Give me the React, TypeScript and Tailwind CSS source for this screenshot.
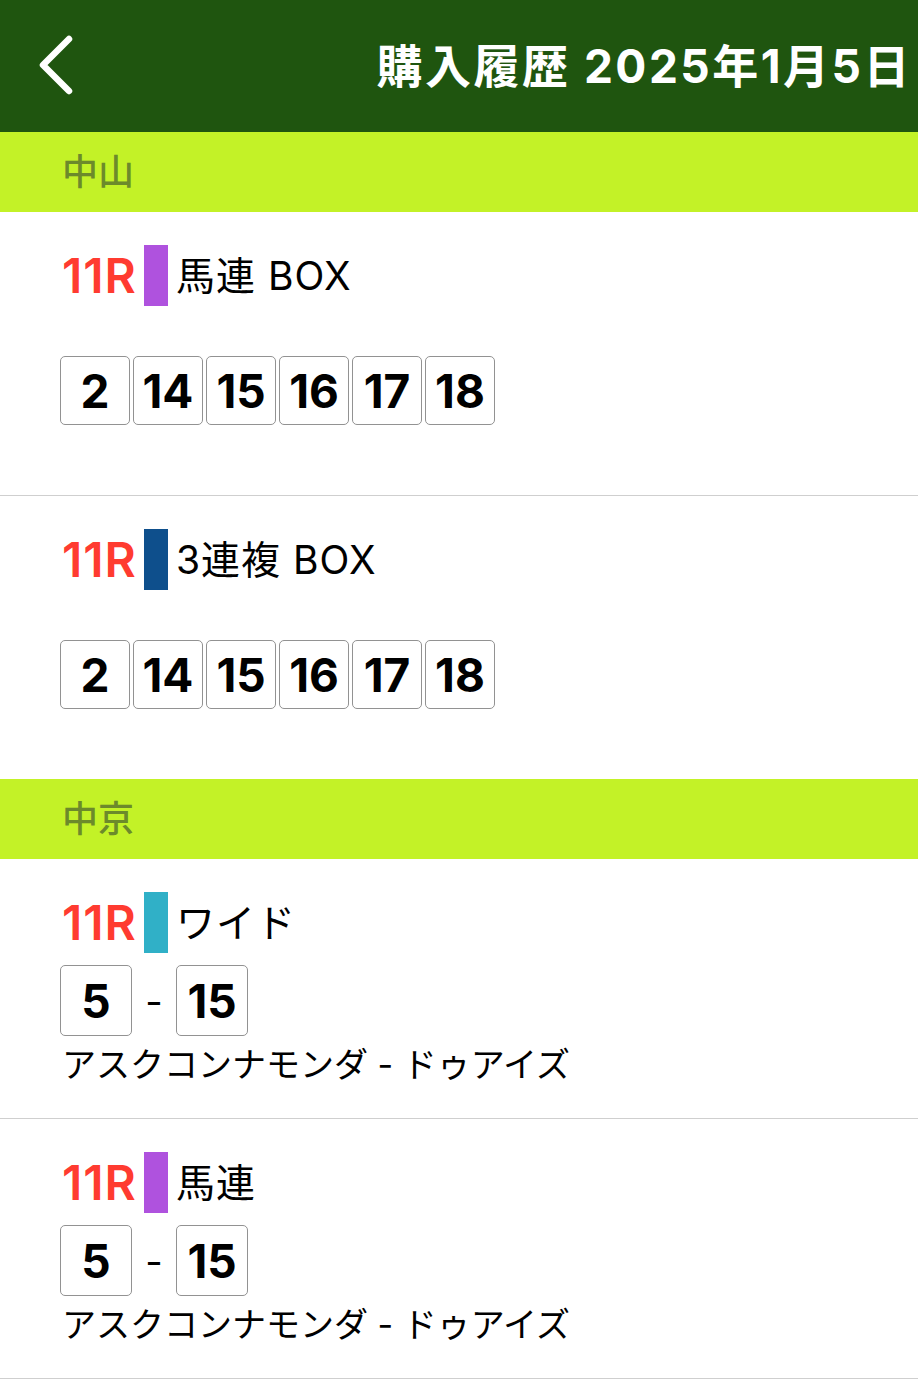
const FONT = { fontFamily: '"Inter", "Noto Sans CJK JP", sans-serif' };

type Bet = {
  type: string;
  color: string;
  nums: string[];
  box?: boolean;
  names?: string;
};

const sections: { venue: string; bets: Bet[] }[] = [
  {
    venue: "中山",
    bets: [
      { type: "馬連 BOX", color: "bg-[#af52de]", nums: ["2", "14", "15", "16", "17", "18"], box: true },
      { type: "3連複 BOX", color: "bg-[#0e4f8c]", nums: ["2", "14", "15", "16", "17", "18"], box: true },
    ],
  },
  {
    venue: "中京",
    bets: [
      { type: "ワイド", color: "bg-[#30b0c7]", nums: ["5", "15"], names: "アスクコンナモンダ - ドゥアイズ" },
      { type: "馬連", color: "bg-[#af52de]", nums: ["5", "15"], names: "アスクコンナモンダ - ドゥアイズ" },
    ],
  },
];

function RaceHeader({ type, color }: { type: string; color: string }) {
  return (
    <div className="flex items-center h-[61px]">
      <span className="w-[77px] text-[48px] font-semibold text-[#ff3b30] leading-none pl-[2px] tracking-[1px]">11R</span>
      <span className={`w-[24px] h-[61px] ml-[7px] ${color}`} />
      <span className="text-[39px] text-black leading-none ml-[8px] tracking-[1px]">{type}</span>
    </div>
  );
}

function NumBox({ n, wide }: { n: string; wide?: boolean }) {
  return (
    <div
      className={`flex items-center justify-center border-[1.5px] border-[#929292] rounded-[5px] bg-white text-[46px] font-bold text-black leading-none ${
        wide ? "w-[72px] h-[71px]" : "w-[70px] h-[69px]"
      }`}
    >
      {n}
    </div>
  );
}

function BetRow({ bet, divider }: { bet: Bet; divider: boolean }) {
  if (bet.box) {
    return (
      <div className={`pl-[60px] pt-[33px] pb-[70px] ${divider ? "border-b border-[#cfcfcf]" : ""}`}>
        <RaceHeader type={bet.type} color={bet.color} />
        <div className="flex gap-[3px] mt-[50px]">
          {bet.nums.map((n, i) => (
            <NumBox key={i} n={n} />
          ))}
        </div>
      </div>
    );
  }
  return (
    <div className={`pl-[60px] pt-[33px] pb-[36px] ${divider ? "border-b border-[#cfcfcf]" : ""}`}>
      <RaceHeader type={bet.type} color={bet.color} />
      <div className="flex items-center mt-[12px]">
        <NumBox n={bet.nums[0]} wide />
        <span className="w-[44px] text-center text-[38px] leading-none text-black">-</span>
        <NumBox n={bet.nums[1]} wide />
      </div>
      <div className="text-[34px] leading-none text-black mt-[12px] ml-[2px]">{bet.names}</div>
    </div>
  );
}

export default function App() {
  return (
    <div className="w-[918px] min-h-[1385px] bg-white" style={FONT}>
      {/* HEADER */}
      <div className="h-[132px] bg-[#1f550f] flex items-center justify-between pl-[38px] pr-[6px]">
        <svg width="40" height="60" viewBox="0 0 40 60" className="mt-[-2px]">
          <path d="M31 4 L5 30 L31 56" fill="none" stroke="white" strokeWidth="6.5" strokeLinecap="round" strokeLinejoin="round" />
        </svg>
        <h1 className="text-[46px] font-bold text-white leading-none tracking-[2.5px]">購入履歴 2025年1月5日</h1>
      </div>

      {sections.map((s, si) => (
        <div key={si}>
          {/* SECTION */}
          <div className="h-[80px] bg-[#c3f227] flex items-center pl-[62px]">
            <span className="text-[36px] font-medium text-[#6c8a2b] leading-none">{s.venue}</span>
          </div>
          {s.bets.map((b, bi) => (
            <BetRow key={bi} bet={b} divider={si === 1 || bi < s.bets.length - 1} />
          ))}
        </div>
      ))}
    </div>
  );
}
